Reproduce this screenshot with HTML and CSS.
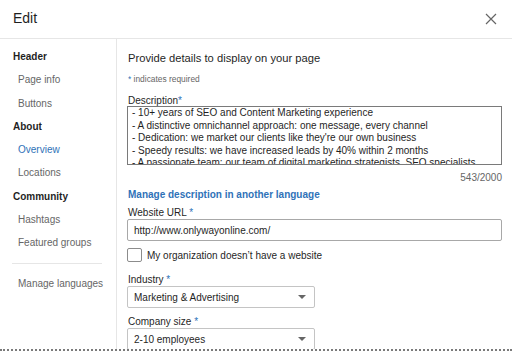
FILE: index.html
```html
<!DOCTYPE html>
<html lang="en">
<head>
    <meta charset="UTF-8">
    <meta name="viewport" content="width=device-width, initial-scale=1.0">
    <title>Edit</title>
    <link rel="stylesheet" href="styles.css">
</head>
<body>
    <div class="modal">
        <header class="modal-header">
            <h1>Edit</h1>
            <button class="close-btn" aria-label="Dismiss">
                <svg width="12" height="12" viewBox="0 0 12 12">
                    <path d="M1 1 L11 11 M11 1 L1 11" stroke="#666" stroke-width="1.2" fill="none"/>
                </svg>
            </button>
        </header>

        <div class="modal-body">
            <nav class="sidebar">
                <div class="nav-section">Header</div>
                <div class="nav-item">Page info</div>
                <div class="nav-item">Buttons</div>
                <div class="nav-section">About</div>
                <div class="nav-item active">Overview</div>
                <div class="nav-item">Locations</div>
                <div class="nav-section">Community</div>
                <div class="nav-item">Hashtags</div>
                <div class="nav-item">Featured groups</div>
                <hr class="nav-divider">
                <div class="nav-item">Manage languages</div>
            </nav>

            <main class="content">
                <h2>Provide details to display on your page</h2>
                <p class="required-note"><span class="star">*</span> indicates required</p>

                <label class="field-label" for="description">Description<span class="star">*</span></label>
                <textarea id="description" class="description" readonly>- 10+ years of SEO and Content Marketing experience
- A distinctive omnichannel approach: one message, every channel
- Dedication: we market our clients like they're our own business
- Speedy results: we have increased leads by 40% within 2 months
- A passionate team: our team of digital marketing strategists, SEO specialists, and content writers</textarea>
                <div class="counter">543/2000</div>
                <a class="link" href="#">Manage description in another language</a>

                <label class="field-label url-label" for="website">Website URL <span class="star">*</span></label>
                <input id="website" class="text-input" type="text" value="http://www.onlywayonline.com/" readonly>

                <div class="check-row">
                    <span class="checkbox"></span>
                    <span>My organization doesn’t have a website</span>
                </div>

                <label class="field-label select-label">Industry <span class="star">*</span></label>
                <div class="select">
                    <span>Marketing &amp; Advertising</span>
                    <span class="arrow"></span>
                </div>

                <label class="field-label select-label size-label">Company size <span class="star">*</span></label>
                <div class="select">
                    <span>2-10 employees</span>
                    <span class="arrow"></span>
                </div>
            </main>
        </div>

        <div class="modal-footer"></div>
    </div>
</body>
</html>
```

FILE: styles.css
```css
* {
    margin: 0;
    padding: 0;
    box-sizing: border-box;
    font-family: 'Liberation Sans', Arial, sans-serif;
}

body {
    background: white;
    color: #1f1f1f;
    width: 512px;
    height: 351px;
    overflow: hidden;
}

.modal {
    display: flex;
    flex-direction: column;
    height: 351px;
}

.modal-header {
    height: 39px;
    border-bottom: 1px solid #e6e6e6;
    display: flex;
    align-items: center;
    justify-content: space-between;
    padding: 0 15px 0 13px;
    flex-shrink: 0;
}

.modal-header h1 {
    font-size: 14px;
    font-weight: normal;
    color: #1f1f1f;
    margin-top: -2px;
}

.close-btn {
    background: none;
    border: none;
    width: 12px;
    height: 12px;
    display: flex;
    cursor: pointer;
}

.modal-body {
    flex: 1;
    display: flex;
    overflow: hidden;
}

.sidebar {
    width: 117px;
    border-right: 1px solid #e6e6e6;
    padding: 6px 0 0 13px;
    flex-shrink: 0;
}

.nav-section,
.nav-item {
    height: 23.3px;
    line-height: 23.3px;
    font-size: 10px;
}

.nav-section {
    font-weight: bold;
    color: #1f1f1f;
}

.nav-item {
    color: #666;
    padding-left: 5px;
}

.nav-item.active {
    color: #2f72b8;
}

.nav-divider {
    border: none;
    border-top: 1px solid #e6e6e6;
    width: 90px;
    margin: 8px 0 8px -1px;
}

.content {
    flex: 1;
    padding: 12px 10px 0 10px;
    font-size: 10px;
}

h2 {
    font-size: 11.2px;
    font-weight: normal;
    line-height: 14px;
    margin-left: 1px;
    color: #1f1f1f;
}

.required-note {
    font-size: 8.4px;
    line-height: 12px;
    color: #666;
    margin: 8px 0 0 1px;
}

.star {
    color: #2f72b8;
}

.field-label {
    display: block;
    font-size: 10px;
    line-height: 11px;
    margin: 10px 0 0 1px;
    color: #1f1f1f;
}

.description {
    display: block;
    width: 100%;
    height: 59px;
    border: 1px solid #7a7a7a;
    padding: 0 4px;
    font-size: 10px;
    line-height: 12.5px;
    color: #1f1f1f;
    resize: none;
    overflow: hidden;
    outline: none;
}

.counter {
    text-align: right;
    color: #666;
    line-height: 13px;
    margin-top: 6px;
}

.link {
    display: block;
    color: #2f72b8;
    font-weight: bold;
    text-decoration: none;
    line-height: 13px;
    margin: 4px 0 0 1px;
}

.url-label {
    margin-top: 6px;
    margin-bottom: 1px;
}

.text-input {
    display: block;
    width: 100%;
    height: 22px;
    border: 1px solid #a8a8a8;
    border-radius: 2px;
    padding: 0 6px;
    font-size: 10px;
    color: #1f1f1f;
    outline: none;
}

.check-row {
    display: flex;
    align-items: center;
    gap: 5px;
    margin-top: 7px;
    height: 14px;
    color: #1f1f1f;
}

.checkbox {
    width: 15px;
    height: 14px;
    border: 1px solid #8c8c8c;
    border-radius: 2px;
}

.select-label {
    margin-top: 12px;
    margin-bottom: 1px;
}

.size-label {
    margin-top: 8px;
}

.select {
    width: 188px;
    height: 22px;
    border: 1px solid #c4c4c4;
    border-radius: 2px;
    display: flex;
    align-items: center;
    justify-content: space-between;
    padding: 0 8px 0 6px;
    color: #1f1f1f;
    flex-shrink: 0;
}

.arrow {
    width: 0;
    height: 0;
    border-left: 4px solid transparent;
    border-right: 4px solid transparent;
    border-top: 4px solid #666;
}

.modal-footer {
    height: 2px;
    border-top: 2px dotted #7a7a7a;
    flex-shrink: 0;
}
```
